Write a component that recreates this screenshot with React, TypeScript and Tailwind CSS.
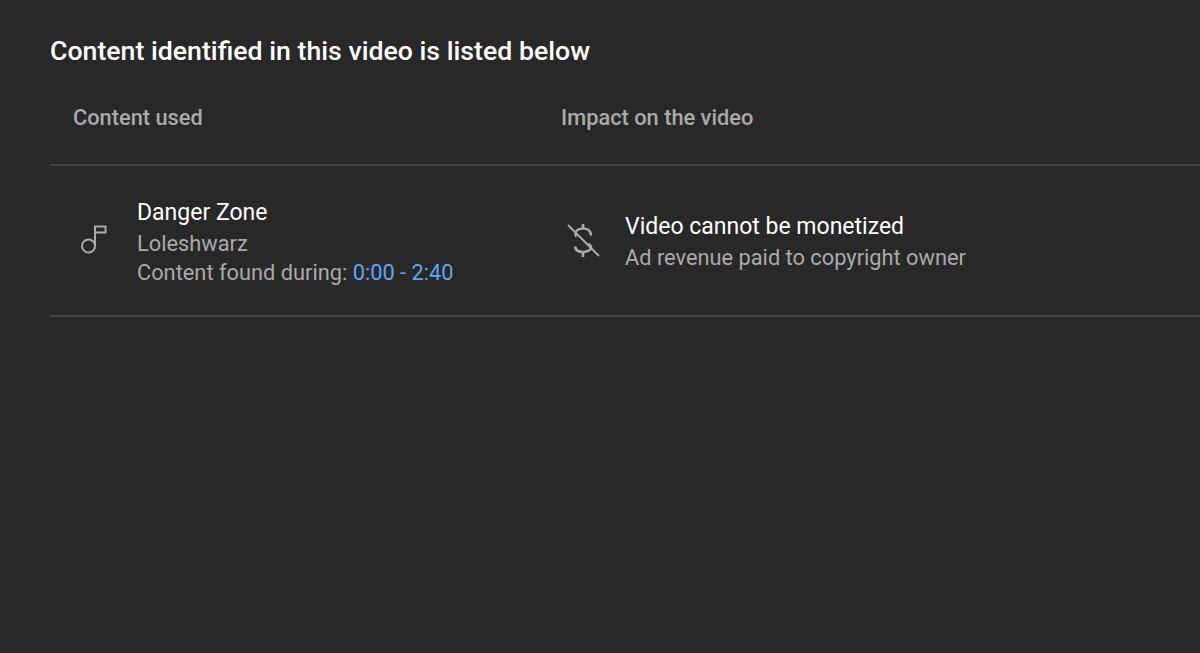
export default function App() {
  return (
    <div className="w-[1200px] h-[653px] overflow-hidden bg-[#282828] pt-[36px] pl-[50px] font-['Roboto',sans-serif]">
      <h1 className="text-[26.7px] leading-[30px] font-medium text-white">Content identified in this video is listed below</h1>

      <div className="flex items-center h-[100px] pt-[7px] border-b-2 border-[#434343] text-[21.8px] font-medium text-[#aaaaaa]">
        <div className="w-[511px] pl-[23px]">Content used</div>
        <div>Impact on the video</div>
      </div>

      <div className="flex items-center h-[151px] border-b-2 border-[#434343]">
        <div className="w-[511px] flex items-center">
          <div className="w-[87px] pl-[22px]">
            <svg width="40" height="40" viewBox="72 222 40 40" fill="none" stroke="#aaaaaa" strokeWidth="2">
              <circle cx="88.500" cy="247" r="6.500" />
              <path d="M95 247V227.500H105.500V233.500H95" />
            </svg>
          </div>
          <div className="pt-[4px] text-[21.8px] leading-[30px] text-[#aaaaaa]">
            <div className="text-[23px] text-white">Danger Zone</div>
            <div className="mt-[1px] -mb-[1px]">Loleshwarz</div>
            <div>Content found during: <span className="text-[#5fa5f0]">0:00 - 2:40</span></div>
          </div>
        </div>
        <div className="flex items-center">
          <div className="w-[64px] pl-[3px]">
            <svg width="40" height="40" viewBox="563 221 40 40" fill="none" stroke="#aaaaaa" strokeWidth="2.600">
              <path d="M567 225L598 256" strokeWidth="2" />
              <path d="M590 235.500C590 231 586.500 228.500 582 228.500C578 228.500 574.500 230.500 574.500 234C574.500 235 575 236 575.500 236.500M587 244C589 245 590 246 590 247.500C590 250 586.500 252 582 252C577.500 252 574.500 250 574 246.500" />
              <path d="M582 224V228.500M582 252V257" />
            </svg>
          </div>
          <div className="pt-[4px] text-[21.8px] leading-[30px] text-[#aaaaaa]">
            <div className="text-[23px] text-white">Video cannot be monetized</div>
            <div className="mt-[1px]">Ad revenue paid to copyright owner</div>
          </div>
        </div>
      </div>
    </div>
  );
}
